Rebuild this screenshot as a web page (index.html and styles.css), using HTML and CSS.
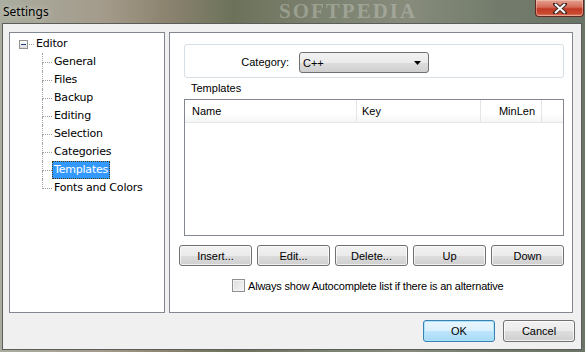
FILE: index.html
```html
<!DOCTYPE html>
<html lang="en">
<head>
<meta charset="UTF-8" />
<title>Settings</title>
<link rel="stylesheet" href="styles.css">
</head>
<body>

<div class="window">
  <div class="titlebar">
    <span class="title">Settings</span>
    <span class="watermark">SOFTPEDIA</span>
    <div class="close-btn">
      <svg width="14" height="11" viewBox="0 0 14 11">
        <path d="M2 1 L12 10 M12 1 L2 10" stroke="#3a2a28" stroke-width="4" stroke-linecap="square" />
        <path d="M2 1 L12 10 M12 1 L2 10" stroke="#fff" stroke-width="2" />
      </svg>
    </div>
  </div>

  <div class="client">
    <div class="panels">
      <div class="tree-panel">
        <div class="tree-root">
          <span class="expander"><span class="minus"></span></span>
          <span class="connector"></span>
          <span class="node">Editor</span>
        </div>
        <ul class="tree-children">
          <li><span class="node">General</span></li>
          <li><span class="node">Files</span></li>
          <li><span class="node">Backup</span></li>
          <li><span class="node">Editing</span></li>
          <li><span class="node">Selection</span></li>
          <li><span class="node">Categories</span></li>
          <li><span class="node selected">Templates</span></li>
          <li><span class="node">Fonts and Colors</span></li>
        </ul>
      </div>

      <div class="page">
        <div class="category-box">
          <span class="category-label">Category:</span>
          <div class="combo">
            <span>C++</span>
            <svg width="7" height="4" viewBox="0 0 7 4"><path d="M0 0 H7 L3.5 4 Z" fill="#000" /></svg>
          </div>
        </div>

        <div class="section-label">Templates</div>
        <div class="listview">
          <div class="lv-header">
            <div class="col col-name">Name</div>
            <div class="col col-key">Key</div>
            <div class="col col-min">MinLen</div>
            <div class="col col-rest"></div>
          </div>
        </div>

        <div class="button-row">
          <button class="btn">Insert...</button>
          <button class="btn">Edit...</button>
          <button class="btn">Delete...</button>
          <button class="btn">Up</button>
          <button class="btn">Down</button>
        </div>

        <label class="check-row">
          <span class="checkbox"></span>
          <span class="check-text">Always show Autocomplete list if there is an alternative</span>
        </label>
      </div>
    </div>

    <div class="dialog-buttons">
      <button class="btn default">OK</button>
      <button class="btn">Cancel</button>
    </div>
  </div>
</div>

</body>
</html>
```

FILE: styles.css
```css
body {
  margin: 0;
  font-family: "Liberation Sans", Arial, sans-serif;
  font-size: 11px;
  color: #000;
}

.window {
  width: 585px;
  height: 352px;
  display: flex;
  flex-direction: column;
  background: linear-gradient(90deg, #aaad9f 0%, #a39a8a 18%, #8d8470 28%, #6c725a 40%, #7c8270 55%, #868b7b 70%, #737c6c 85%, #6a7466 100%);
}

/* Title bar */
.titlebar {
  height: 23px;
  position: relative;
  overflow: hidden;
  flex-shrink: 0;
}

.title {
  position: absolute;
  left: 3px;
  top: 3px;
  font-family: "Noto Sans", sans-serif;
  font-size: 12px;
  color: #000;
  text-shadow: 0 0 6px rgba(255,255,255,0.6);
}

.watermark {
  position: absolute;
  left: 279px;
  top: 1px;
  font-family: "Liberation Serif", serif;
  font-weight: bold;
  font-size: 21px;
  line-height: 21px;
  letter-spacing: 2px;
  color: rgba(220, 222, 214, 0.35);
}

.close-btn {
  position: absolute;
  left: 535px;
  top: 0;
  width: 47px;
  height: 16px;
  border: 1px solid #5e2a22;
  border-top: none;
  border-radius: 0 0 4px 4px;
  background: linear-gradient(#e3a291 0%, #d46a56 45%, #c23a24 55%, #c84a32 85%, #e08a70 100%);
  display: flex;
  align-items: center;
  justify-content: center;
  box-shadow: inset 0 0 0 1px rgba(255,220,210,0.4);
}

/* Client area */
.client {
  flex: 1;
  margin: 0 3px 2px 2px;
  border: 1px solid #5a5d5a;
  background: #f0f0f0;
  padding: 8px 8px 0 6px;
  display: flex;
  flex-direction: column;
}

.panels {
  display: flex;
  gap: 4px;
  height: 281px;
}

/* Tree */
.tree-panel {
  width: 156px;
  box-sizing: border-box;
  background: #fff;
  border: 1px solid #828790;
  padding-top: 2px;
  font-family: "DejaVu Sans", sans-serif;
  letter-spacing: -0.2px;
}

.tree-root {
  display: flex;
  align-items: center;
  height: 18px;
  padding-left: 9px;
}

.expander {
  width: 7px;
  height: 7px;
  border: 1px solid #919191;
  background: linear-gradient(#fff, #dcdcdc);
  display: flex;
  align-items: center;
  justify-content: center;
}

.minus {
  width: 5px;
  height: 1px;
  background: #1e3a8a;
}

.connector {
  width: 5px;
  margin-left: 1px;
  border-top: 1px dotted #a0a0a0;
}

.node {
  display: inline-block;
  height: 18px;
  line-height: 18px;
  padding: 0 2px;
  box-sizing: border-box;
  white-space: nowrap;
}

.node.selected {
  background: #3399ff;
  color: #fff;
  outline: 1px dotted #4a3a10;
  outline-offset: -1px;
}

.tree-children {
  list-style: none;
  margin: 0 0 0 32px;
  padding: 0;
}

.tree-children li {
  position: relative;
  height: 18px;
  padding-left: 10px;
}

.tree-children li::before {
  content: "";
  position: absolute;
  left: 0;
  top: 0;
  width: 9px;
  height: 9px;
  border-left: 1px dotted #a0a0a0;
  border-bottom: 1px dotted #a0a0a0;
}

.tree-children li:not(:last-child)::after {
  content: "";
  position: absolute;
  left: 0;
  top: 10px;
  bottom: 0;
  border-left: 1px dotted #a0a0a0;
}

/* Templates page */
.page {
  width: 404px;
  box-sizing: border-box;
  background: #fff;
  border: 1px solid #828790;
  padding: 11px 8px 0 9px;
}

.category-box {
  margin-left: 5px;
  height: 34px;
  box-sizing: border-box;
  border: 1px solid #d5dfe5;
  border-radius: 3px;
  padding-top: 7px;
  display: flex;
  align-items: flex-start;
  gap: 10px;
}

.category-label {
  width: 104px;
  text-align: right;
  line-height: 21px;
}

.combo {
  width: 130px;
  height: 21px;
  box-sizing: border-box;
  border: 1px solid #707070;
  border-radius: 3px;
  background: linear-gradient(#f2f2f2 0%, #ebebeb 50%, #dddddd 51%, #cfcfcf 100%);
  display: flex;
  align-items: center;
  justify-content: space-between;
  padding: 0 7px 0 3px;
}

.section-label {
  margin: 3px 0 4px 12px;
  line-height: 14px;
}

.listview {
  margin-left: 5px;
  height: 137px;
  box-sizing: border-box;
  border: 1px solid #828790;
  background: #fff;
}

.lv-header {
  display: flex;
  height: 23px;
  box-sizing: border-box;
  border-bottom: 1px solid #e5e5e5;
  background: linear-gradient(#fff 0%, #fff 60%, #f5f6f7 100%);
}

.col {
  box-sizing: border-box;
  line-height: 22px;
  border-right: 1px solid #e3e5e8;
}

.col-name {
  width: 172px;
  padding-left: 7px;
}

.col-key {
  width: 124px;
  padding-left: 5px;
}

.col-min {
  width: 61px;
  text-align: right;
  padding-right: 6px;
}

.col-rest {
  flex: 1;
  border-right: none;
}

.button-row {
  display: flex;
  gap: 5px;
  margin-top: 9px;
}

.btn {
  width: 73px;
  height: 21px;
  padding: 0;
  font-family: "Liberation Sans", Arial, sans-serif;
  font-size: 11px;
  color: #000;
  border: 1px solid #707070;
  border-radius: 3px;
  background: linear-gradient(#f2f2f2 0%, #ebebeb 50%, #dddddd 51%, #cfcfcf 100%);
  box-shadow: inset 0 0 0 1px rgba(255,255,255,0.7);
}

.check-row {
  display: flex;
  align-items: center;
  gap: 3px;
  margin: 13px 0 0 53px;
}

.check-text {
  letter-spacing: -0.2px;
}

.checkbox {
  width: 13px;
  height: 13px;
  box-sizing: border-box;
  border: 1px solid #8e8f8f;
  background: linear-gradient(135deg, #dcdcdc, #f6f6f6);
  box-shadow: inset 0 0 0 1px #f4f4f4;
}

/* OK / Cancel */
.dialog-buttons {
  display: flex;
  justify-content: flex-end;
  gap: 8px;
  margin: 7px -2px 0 0;
}

.dialog-buttons .btn {
  width: 72px;
  height: 22px;
}

.btn.default {
  border-color: #3c7fb1;
  background: linear-gradient(#eaf6fd 0%, #d9f0fc 50%, #bee6fd 51%, #a7d9f5 100%);
  box-shadow: inset 0 0 0 1px #a8e4fa;
}
```
